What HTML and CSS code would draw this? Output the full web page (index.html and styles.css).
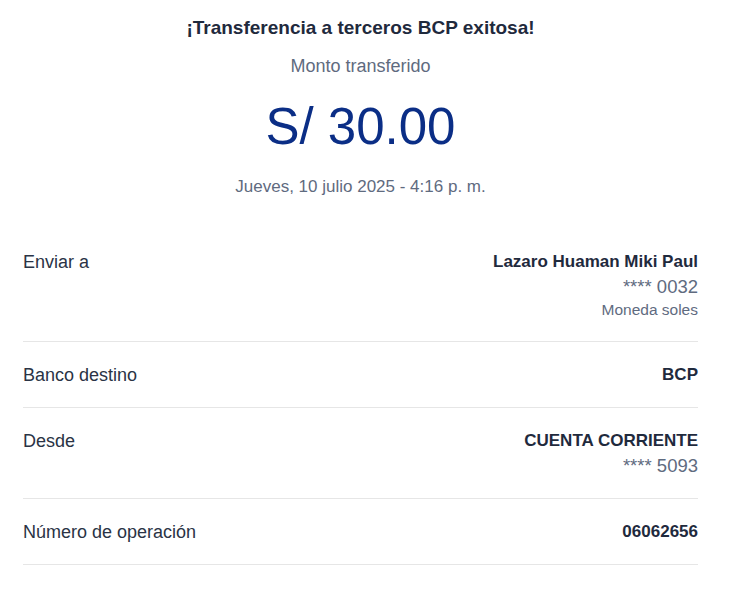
FILE: index.html
```html
<!DOCTYPE html>
<html lang="es">
<head>
<meta charset="utf-8">
<title>Transferencia exitosa</title>
<link rel="stylesheet" href="styles.css">
</head>
<body>
<main class="receipt">
  <header class="summary">
    <h1 class="title">¡Transferencia a terceros BCP exitosa!</h1>
    <p class="subtitle">Monto transferido</p>
    <p class="amount">S/ 30.00</p>
    <p class="date">Jueves, 10 julio 2025 - 4:16 p. m.</p>
  </header>
  <section class="details">
    <div class="row">
      <span class="label">Enviar a</span>
      <div class="value">
        <span class="strong">Lazaro Huaman Miki Paul</span>
        <span class="muted">**** 0032</span>
        <span class="small">Moneda soles</span>
      </div>
    </div>
    <div class="row">
      <span class="label">Banco destino</span>
      <div class="value">
        <span class="strong">BCP</span>
      </div>
    </div>
    <div class="row">
      <span class="label">Desde</span>
      <div class="value">
        <span class="strong">CUENTA CORRIENTE</span>
        <span class="muted">**** 5093</span>
      </div>
    </div>
    <div class="row">
      <span class="label">Número de operación</span>
      <div class="value">
        <span class="strong">06062656</span>
      </div>
    </div>
  </section>
</main>
</body>
</html>
```
FILE: styles.css
```css
* { box-sizing: border-box; }
html, body {
  margin: 0;
  padding: 0;
  background: #ffffff;
}
body {
  font-family: "Liberation Sans", Arial, sans-serif;
  color: #2a3345;
}
.receipt {
  width: 675px;
  margin: 0 0 0 23px;
}
.summary {
  display: flex;
  flex-direction: column;
  align-items: center;
  padding-top: 16px;
}
.summary p { margin: 0; }
.title {
  margin: 0;
  font-size: 19px;
  line-height: 24px;
  font-weight: 700;
  color: #1f2a3d;
}
.subtitle {
  margin-top: 14px !important;
  font-size: 18px;
  line-height: 24px;
  color: #5f6b7f;
}
.amount {
  margin-top: 19px !important;
  font-size: 51px;
  line-height: 60px;
  color: #0b2e86;
}
.date {
  margin-top: 18px !important;
  font-size: 17px;
  line-height: 24px;
  color: #5f6b7f;
}
.details {
  margin-top: 51px;
}
.row {
  display: flex;
  justify-content: space-between;
  align-items: flex-start;
  padding: 21px 0 20px;
  border-bottom: 1px solid #e6e6e6;
}
.row:first-child { padding-top: 0; padding-bottom: 21px; }
.label {
  font-size: 18px;
  line-height: 24px;
  color: #2a3345;
}
.value {
  display: flex;
  flex-direction: column;
  align-items: flex-end;
}
.strong {
  font-size: 17px;
  line-height: 24px;
  font-weight: 700;
  color: #1f2a3d;
}
.muted {
  font-size: 18.5px;
  line-height: 25px;
  color: #5f6b7f;
}
.small {
  font-size: 15.5px;
  line-height: 21px;
  color: #5f6b7f;
}
```
